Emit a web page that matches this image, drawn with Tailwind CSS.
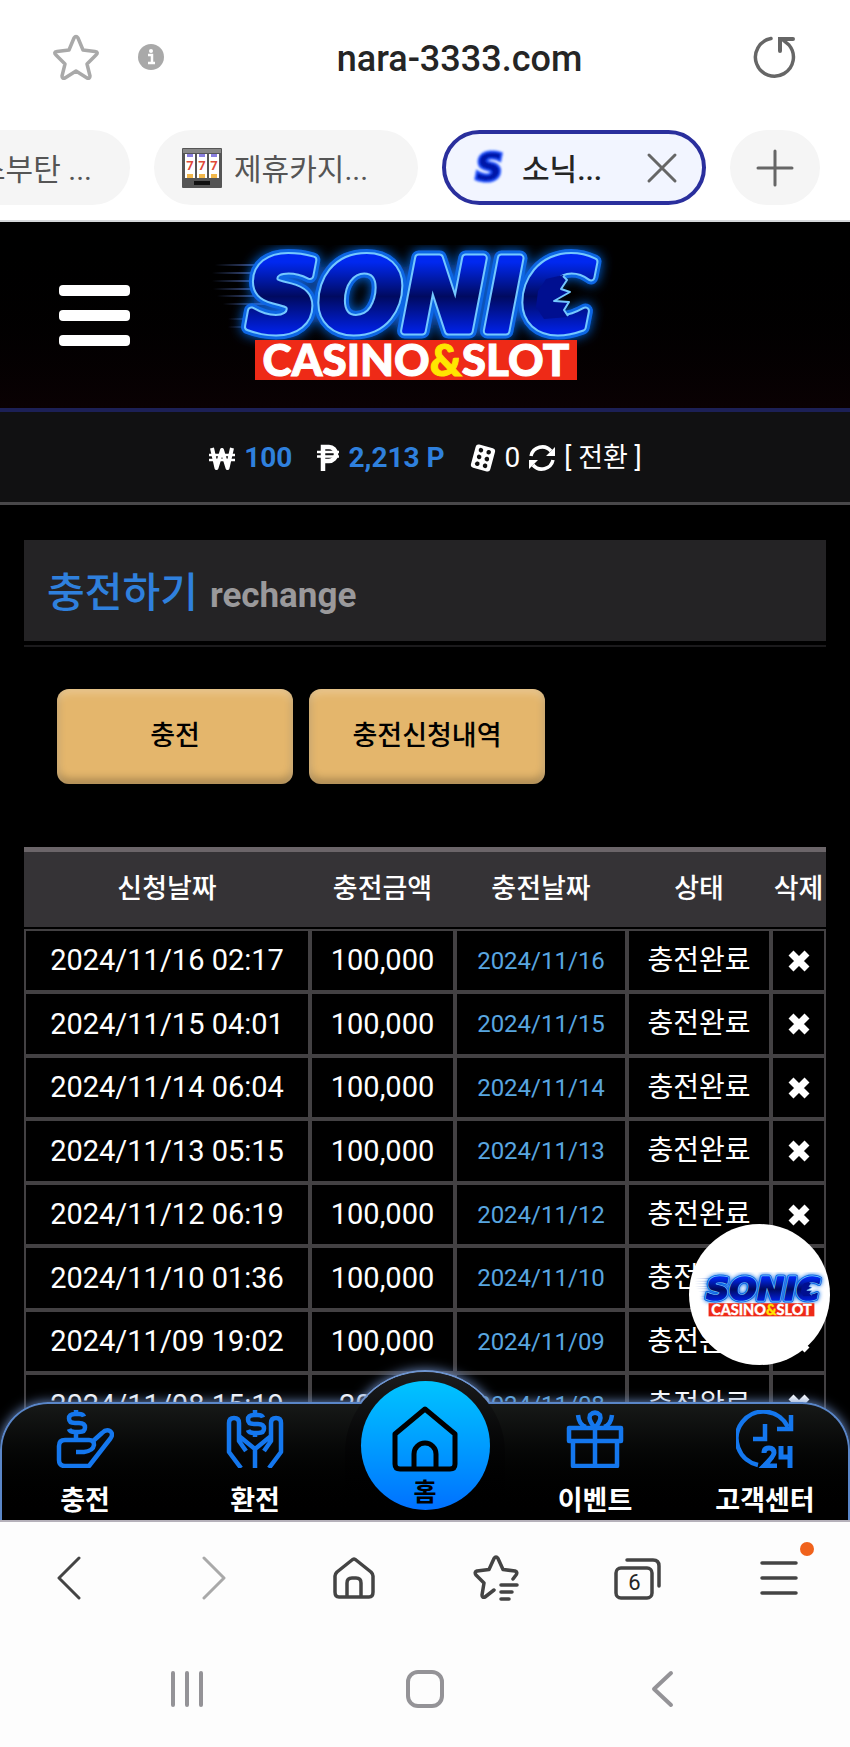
<!DOCTYPE html>
<html lang="ko">
<head>
    <meta charset="UTF-8">
    <meta name="viewport" content="width=device-width, initial-scale=1.0">
    <title>소닉 카지노 - 충전하기</title>
    <script src="https://cdn.jsdelivr.net/npm/@tailwindcss/browser@4"></script>
</head>
<body class="flex h-screen flex-col overflow-hidden bg-white font-['Roboto','Noto_Sans_CJK_KR',sans-serif] text-[#252525]">

    <!-- logo, used in the header and in the floating button -->
    <svg class="absolute h-0 w-0" aria-hidden="true">
        <defs>
            <filter id="glow" x="-20%" y="-30%" width="140%" height="160%">
                <feGaussianBlur in="SourceGraphic" stdDeviation="6" result="blur" />
                <feMerge><feMergeNode in="blur" /><feMergeNode in="SourceGraphic" /></feMerge>
            </filter>
            <filter id="soft" x="-30%" y="-30%" width="160%" height="160%">
                <feGaussianBlur stdDeviation="1.2" />
            </filter>
            <linearGradient id="letters" x1="0" y1="0" x2="0" y2="1">
                <stop offset="0.2" stop-color="#0028f0" />
                <stop offset="0.5" stop-color="#000a60" />
                <stop offset="0.8" stop-color="#0020e0" />
            </linearGradient>
            <linearGradient id="streak" x1="0" y1="0" x2="1" y2="0">
                <stop offset="0" stop-color="#5a78c8" stop-opacity="0" />
                <stop offset="1" stop-color="#5a78c8" />
            </linearGradient>
        </defs>
        <symbol id="logo" viewBox="0 0 410 140">
            <g fill="url(#streak)">
                <rect x="10" y="19" width="60" height="2" />
                <rect x="7" y="27" width="60" height="2" />
                <rect x="7" y="35" width="60" height="2" />
                <rect x="8" y="43" width="60" height="2" />
                <rect x="12" y="50" width="60" height="2" />
                <rect x="18" y="58" width="50" height="2" />
                <rect x="23" y="73" width="40" height="2" />
                <rect x="23" y="81" width="40" height="2" />
            </g>
            <g font-family="DejaVu Sans, sans-serif" font-weight="700" font-style="italic" font-size="99" stroke-linejoin="round">
                <text x="42" y="86" fill="#0f66e4" stroke="#0f66e4" stroke-width="15" filter="url(#glow)">SONIC</text>
                <text x="42" y="86" fill="#74c8ff" stroke="#74c8ff" stroke-width="9">SONIC</text>
                <text x="42" y="86" fill="url(#letters)" stroke="url(#letters)" stroke-width="5">SONIC</text>
                <path d="M358 30l4 5-6 9 9 3-16 9 15 1-5 8 4 7-24 2-8-12 2-16 8-12z" fill="#000f90" />
                <path d="M358 31l4 4-6 9 9 3-16 9 15 1-5 8 4 6" fill="none" stroke="#74c8ff" stroke-width="2" />
            </g>
            <rect x="50" y="95" width="322" height="40" fill="#ee2a17" />
            <text x="211" y="131" text-anchor="middle" font-family="Lato, sans-serif" font-weight="900" font-size="44" fill="#fff" stroke="#fff">CASINO<tspan fill="#ffe600" stroke="#ffe600">&amp;</tspan>SLOT</text>
        </symbol>
    </svg>

    <!-- address bar -->
    <header class="shrink-0 border-b-2 border-[#d5d7da]">
        <div class="flex h-[114px] items-center pr-[51px] pl-[52px]">
            <button aria-label="북마크 추가" class="shrink-0">
                <svg class="h-12 w-12" viewBox="0 0 48 48" fill="none" stroke="#a9a9a9" stroke-width="3.500" stroke-linejoin="round"><path d="M22 5q2-3 4 0l5 12 12 1.500q4 .500 1 3.500l-9 9 3 12q0 3-3 2l-11-7-11 7q-3 1-3-2l3-12-9-9q-3-3 1-3.500L17 17Z" /></svg>
            </button>
            <button aria-label="사이트 정보" class="ml-9 shrink-0">
                <svg class="h-7 w-7" viewBox="0 0 28 28"><circle cx="15" cy="14" r="13" fill="#a9a9a9" /><circle cx="15" cy="8" r="2" fill="#fff" /><path d="M12 12h4v8M12 20h7" fill="none" stroke="#fff" stroke-width="2.500" /></svg>
            </button>
            <p class="grow pt-1 pl-1 text-center text-[36px] leading-none font-medium">nara-3333.com</p>
            <button aria-label="새로고침" class="shrink-0">
                <svg class="h-12 w-12" viewBox="0 0 48 48" fill="none" stroke="#666" stroke-width="3.500" stroke-linecap="round"><path d="M20 5.500 A19 19 0 1 0 38 12l-6-5" /><path d="M29 18V6h13" stroke-width="4" /></svg>
            </button>
        </div>
        <div class="flex h-[106px] items-start gap-6 overflow-hidden pt-4">
            <button class="flex h-[75px] w-[130px] shrink-0 items-center justify-end rounded-r-full bg-[#f5f5f5] pt-1 pr-[38px] text-[30px] whitespace-nowrap text-[#555]">스부탄 ...</button>
            <button class="flex h-[75px] w-[264px] shrink-0 items-center gap-3 rounded-full bg-[#f5f5f5] pl-7 text-[30px] text-[#555]">
                <svg class="h-10 w-10" viewBox="0 0 40 40">
                    <rect width="40" height="40" rx="1" fill="#555" /><rect x="1" y="1" width="38" height="4" fill="#888" />
                    <path d="M3 6h10v24H3zM15 6h10v24H15zM27 6h10v24H27z" fill="#fff" />
                    <path d="M5 6h6v3H5zM17 6h6v3h-6zM29 6h6v3h-6z" fill="#8a7fe0" />
                    <path d="M5 26h6v4H5zM17 26h6v4h-6zM29 26h6v4h-6z" fill="#f2b84b" />
                    <path d="M12 33h16v4H12z" fill="#111" />
                    <g fill="#e04a3a" font-size="13" font-weight="700" text-anchor="middle" font-family="Roboto, sans-serif"><text x="8" y="22">7</text><text x="20" y="22">7</text><text x="32" y="22">7</text></g>
                </svg>
                <span class="pt-1">제휴카지...</span>
            </button>
            <div class="flex h-[75px] w-[264px] shrink-0 items-center rounded-full border-4 border-[#2a2f9d] bg-[#f2f5ff] pl-6">
                <svg class="h-12 w-10 overflow-visible" viewBox="0 0 40 48"><text x="6" y="36" fill="#0515a8" stroke="#1f4fff" stroke-width="4" paint-order="stroke" filter="url(#soft)" font-family="DejaVu Sans, sans-serif" font-weight="700" font-style="italic" font-size="37">S</text></svg>
                <span class="ml-3 pt-1 text-[30px] font-medium">소닉...</span>
                <button aria-label="탭 닫기" class="ml-auto pr-6">
                    <svg class="h-8 w-8" viewBox="0 0 32 32" fill="none" stroke="#666" stroke-width="3" stroke-linecap="round"><path d="M3 3l26 26M29 3L3 29" /></svg>
                </button>
            </div>
            <button aria-label="새 탭" class="flex h-[75px] w-[90px] shrink-0 items-center justify-center rounded-full bg-[#f5f5f5]">
                <svg class="h-10 w-10" viewBox="0 0 40 40" fill="none" stroke="#666" stroke-width="3" stroke-linecap="round"><path d="M20 3v34M3 20h34" /></svg>
            </button>
        </div>
    </header>

    <!-- site -->
    <main class="relative min-h-0 grow overflow-hidden bg-black text-white">
        <div class="relative flex h-[190px] items-start justify-center border-b-4 border-[#1c2056] bg-linear-to-b from-black to-[#0a0103] pt-[23px] pr-[30px]">
            <button aria-label="메뉴" class="absolute top-[63px] left-[59px] flex w-[71px] flex-col gap-[14px]">
                <span class="h-[11px] rounded-sm bg-white"></span>
                <span class="h-[11px] rounded-sm bg-white"></span>
                <span class="h-[11px] rounded-sm bg-white"></span>
            </button>
            <a href="#" aria-label="SONIC CASINO&amp;SLOT"><svg class="h-[140px] w-[410px] overflow-visible"><use href="#logo" /></svg></a>
        </div>

        <div class="flex h-[93px] items-center justify-center border-b-3 border-[#49484a] bg-[#111112] pt-[2px] text-[28px] leading-none">
            <svg class="h-6 w-7" viewBox="0 0 28 24" fill="none" stroke="#fff"><path d="M4 2l4.500 20L14 4l5.500 18L24 2" stroke-width="4" stroke-linejoin="round" /><path d="M1 9h26M1 14h26" stroke-width="2.500" /></svg>
            <span class="ml-2 font-bold text-[#2f80dd]">100</span>
            <svg class="ml-6 h-7 w-6" viewBox="0 0 24 28" fill="none" stroke="#fff"><path d="M7 27V3h6a6.500 6.500 0 0 1 0 14H7" stroke-width="4.500" /><path d="M1 8h22M1 12.500h22" stroke-width="2.500" /></svg>
            <span class="ml-2 font-bold text-[#2f80dd]">2,213 P</span>
            <svg class="ml-6 h-7 w-7" viewBox="0 0 28 28"><g transform="rotate(15 14 14)"><rect x="4" y="2" width="20" height="24" rx="3" fill="#fff" /><g fill="#111"><circle cx="10" cy="7" r="2.300" /><circle cx="10" cy="14" r="2.300" /><circle cx="10" cy="21" r="2.300" /><circle cx="18" cy="7" r="2.300" /><circle cx="18" cy="14" r="2.300" /><circle cx="18" cy="21" r="2.300" /></g></g></svg>
            <span class="mx-2">0</span>
            <svg class="h-7 w-7" viewBox="0 0 28 28"><g fill="none" stroke="#fff" stroke-width="3.500"><path d="M3 12A11.500 11.500 0 0 1 23 7" /><path d="M25 16A11.500 11.500 0 0 1 5 21" /></g><path d="M27 3v9h-9zM1 25V16h9z" fill="#fff" /></svg>
            <button class="ml-2 text-[27px] whitespace-nowrap">[ 전환 ]</button>
        </div>

        <div class="mx-6 pt-[35px]">
            <div class="border-b-2 border-[#1b1a1c] pb-1">
                <h1 class="flex h-[101px] items-baseline bg-[#242325] pl-[23px] text-[41px] leading-[106px] font-medium text-[#2f80dd]">충전하기 <small class="ml-3 text-[35px] font-bold text-[#9a999b]">rechange</small></h1>
            </div>

            <div class="mt-[42px] flex gap-4 pl-[33px] text-[27px] font-medium text-black">
                <button class="h-[95px] w-[236px] rounded-xl bg-[#e4b66c] shadow-[inset_0_4px_8px_#ffffff44,inset_0_-5px_8px_#00000044]">충전</button>
                <button class="h-[95px] w-[236px] rounded-xl bg-[#e4b66c] shadow-[inset_0_4px_8px_#ffffff44,inset_0_-5px_8px_#00000044]">충전신청내역</button>
            </div>

            <table class="mt-[63px] w-full table-fixed border-separate border-spacing-0 text-center text-[29px] leading-none">
                <colgroup>
                    <col class="w-[286px]"><col class="w-[145px]"><col class="w-[172px]"><col class="w-[144px]"><col class="w-[55px]">
                </colgroup>
                <thead>
                    <tr class="h-[82px] whitespace-nowrap *:border-t-5 *:border-b-2 *:border-t-[#6b6569] *:border-b-black *:bg-[#353336] *:p-0 *:text-[27px] *:font-medium">
                        <th>신청날짜</th><th>충전금액</th><th>충전날짜</th><th>상태</th><th>삭제</th>
                    </tr>
                </thead>
                <tbody id="rows"></tbody>
            </table>
        </div>

        <a href="#" aria-label="SONIC CASINO&amp;SLOT" class="absolute right-5 bottom-[155px] flex h-[141px] w-[141px] items-center justify-center rounded-full bg-white">
            <svg class="h-[46px] w-[135px]"><use href="#logo" /></svg>
        </a>

        <!-- bottom menu: the bump sits behind the bar, the disc hides the bar's edge inside it -->
        <nav class="absolute inset-x-0 bottom-0 h-[118px] text-[27px] leading-none font-bold">
            <div class="absolute -top-8 left-1/2 size-[164px] -translate-x-1/2 rounded-full border-2 border-[#6f95cf] shadow-[0_0_12px_#6f8fc8]"></div>
            <div class="absolute inset-0 rounded-t-[48px] border-2 border-b-0 border-[#5a86c8] bg-linear-to-b from-[#171918] to-black shadow-[0_0_12px_#6f8fc8]"></div>
            <div class="absolute -top-[30px] left-1/2 h-[148px] w-[160px] -translate-x-1/2 rounded-t-full bg-linear-to-b from-[#1c1d1e] to-black"></div>
            <div class="relative grid h-full grid-cols-5 text-center">
                <a href="#" class="flex flex-col items-center gap-5 pt-2">
                    <svg class="h-[58px] w-[58px]" viewBox="0 0 58 58" fill="none" stroke="#1477ee" stroke-width="4.500" stroke-linejoin="round"><path d="M28 6.500Q27 4 23 4h-4q-6 0-6 4.500t6 4.500h4q6 0 6 4.500T23 22h-4q-5 0-6-3M20 0v4M20 22v6" /><path d="M20 42h8q9-1 10-7 0-5-5-5H9q-6 0-6 6v14q0 6 6 6h24L54 29q4-5 0-8-4-2-8 2L36 32" /></svg>
                    충전
                </a>
                <a href="#" class="flex flex-col items-center gap-5 pt-2">
                    <svg class="h-[58px] w-[58px]" viewBox="0 0 58 58" fill="none" stroke="#1477ee" stroke-width="4.500" stroke-linejoin="round"><path d="M37 7.500Q36 5 32 5h-4q-6 0-6 4.500t6 4.500h4q6 0 6 4.500T32 23h-4q-5 0-6-3M29 0v5M29 23v4" /><path d="M15 58L3 42V13q0-5 5-5t5 5v18l7 10M43 58l12-16V13q0-5-5-5t-5 5v18l-7 10M13 26l16 13v19M45 26L29 39" /></svg>
                    환전
                </a>
                <a href="#" class="relative flex flex-col items-center text-black">
                    <span class="absolute -top-[21px] flex size-[129px] flex-col items-center rounded-full bg-linear-to-b from-[#00c4ff] to-[#0070ff] pt-[25px] text-[25px]">
                        <svg class="h-[66px] w-[66px]" viewBox="0 0 66 66" fill="none" stroke="#000" stroke-width="5" stroke-linejoin="round"><path d="M33 3L3 28v30q0 5 5 5h50q5 0 5-5V28Z" /><path d="M22 63V48a11 11 0 0 1 22 0v15" /></svg>
                        <span class="mt-2">홈</span>
                    </span>
                </a>
                <a href="#" class="flex flex-col items-center gap-5 pt-2">
                    <svg class="h-[58px] w-[58px]" viewBox="0 0 58 58" fill="none" stroke="#1477ee" stroke-width="4.500"><path d="M7 33v23h44V33M29 18v38M3 18h52v13H3z" stroke-linejoin="round" /><path d="M29 18q-7-8-5-13 5-5 10 0 2 5-5 13M12 5q1 10 8 12M46 5q-1 10-8 12" /></svg>
                    이벤트
                </a>
                <a href="#" class="flex flex-col items-center gap-5 pt-2">
                    <svg class="h-[58px] w-[58px]" viewBox="0 0 58 58" fill="none" stroke="#1477ee" stroke-width="4.500"><path d="M22 55A27 27 0 1 1 52 17" /><path d="M55 5v14H41M29 14v15H17" /><path d="M28 43q0-5 5-5t5 5q0 3-10 13h13M45 36v11h11M54 36v22" stroke-width="5" /></svg>
                    고객센터
                </a>
            </div>
        </nav>
    </main>

    <!-- browser toolbar -->
    <footer class="shrink-0 border-t-2 border-[#b5b1ba] bg-[#fdfdfd]">
        <div class="grid h-28 grid-cols-6 place-items-center">
            <button aria-label="뒤로"><svg class="h-11 w-11" viewBox="0 0 44 44" fill="none" stroke="#444" stroke-width="3" stroke-linecap="round" stroke-linejoin="round"><path d="M30 2L10 22l20 20" /></svg></button>
            <button aria-label="앞으로"><svg class="h-11 w-11" viewBox="0 0 44 44" fill="none" stroke="#a9a9a9" stroke-width="3" stroke-linecap="round" stroke-linejoin="round"><path d="M14 2l20 20-20 20" /></svg></button>
            <button aria-label="홈"><svg class="h-11 w-11" viewBox="0 0 44 44" fill="none" stroke="#444" stroke-width="3.500" stroke-linejoin="round"><path d="M20 4q2-2 4 0l15 12q2 2 2 4v16q0 5-4 5H7q-4 0-4-5V20q0-2 2-4Z" /><path d="M15 41V27q0-5 5-5h4q5 0 5 5v14" /></svg></button>
            <button aria-label="북마크"><svg class="h-12 w-12" viewBox="0 0 48 48" fill="none" stroke="#444" stroke-width="3.500" stroke-linecap="round" stroke-linejoin="round"><path d="M22 36l-9 7q-3 1-3-2l2-12-8-8q-2-3 1-4l12-1.500 5-11q2-3 4 0l5 11L43 17q3 1 1 4l-3 4M29 31h16M29 38h11M29 45h8" /></svg></button>
            <button aria-label="탭 6개" class="relative"><svg class="h-12 w-12" viewBox="0 0 48 48" fill="none" stroke="#444" stroke-width="3.500" stroke-linecap="round"><rect x="3" y="14" width="36" height="30" rx="5" /><path d="M14 6h26q6 0 6 6v20" /></svg><span class="absolute top-[18px] left-0 w-[42px] text-center text-[22px] leading-none">6</span></button>
            <button aria-label="메뉴" class="relative"><svg class="h-11 w-11" viewBox="0 0 44 44" fill="none" stroke="#444" stroke-width="3.500" stroke-linecap="round"><path d="M5 7h34M5 22h34M5 37h34" /></svg><span class="absolute -top-[14px] -right-[13px] size-[14px] rounded-full bg-[#f0621c]"></span></button>
        </div>
        <div class="grid h-[113px] grid-cols-3 items-start justify-items-center px-[68px] pt-[35px]">
            <button aria-label="최근 앱"><svg class="h-10 w-10" viewBox="0 0 40 40" stroke="#949397" stroke-width="4" stroke-linecap="round"><path d="M6 4v32M20 4v32M34 4v32" /></svg></button>
            <button aria-label="홈 화면"><svg class="h-10 w-10" viewBox="0 0 40 40" fill="none" stroke="#949397" stroke-width="4"><rect x="3" y="3" width="34" height="34" rx="10" /></svg></button>
            <button aria-label="뒤로 가기"><svg class="h-10 w-10" viewBox="0 0 40 40" fill="none" stroke="#949397" stroke-width="4" stroke-linecap="round" stroke-linejoin="round"><path d="M28 4L11 20l17 16" /></svg></button>
        </div>
    </footer>

    <script>
        const rows = [
            ["2024/11/16", "02:17", "100,000"],
            ["2024/11/15", "04:01", "100,000"],
            ["2024/11/14", "06:04", "100,000"],
            ["2024/11/13", "05:15", "100,000"],
            ["2024/11/12", "06:19", "100,000"],
            ["2024/11/10", "01:36", "100,000"],
            ["2024/11/09", "19:02", "100,000"],
            ["2024/11/08", "15:19", "20,000"],
        ];

        document.getElementById("rows").innerHTML = rows.map(([date, time, amount]) => `
            <tr class="odd:h-[63px] even:h-16 whitespace-nowrap *:border-2 *:border-[#434143] *:p-0">
                <td>${date} ${time}</td>
                <td>${amount}</td>
                <td class="text-[24px] text-[#58a6e0]">${date}</td>
                <td class="text-[28px]">충전완료</td>
                <td><button aria-label="삭제" class="block mx-auto"><svg class="h-6 w-6" viewBox="0 0 24 24" stroke="#fff" stroke-width="7"><path d="M4 4l16 16M20 4L4 20" /></svg></button></td>
            </tr>`).join("");
    </script>
</body>
</html>
